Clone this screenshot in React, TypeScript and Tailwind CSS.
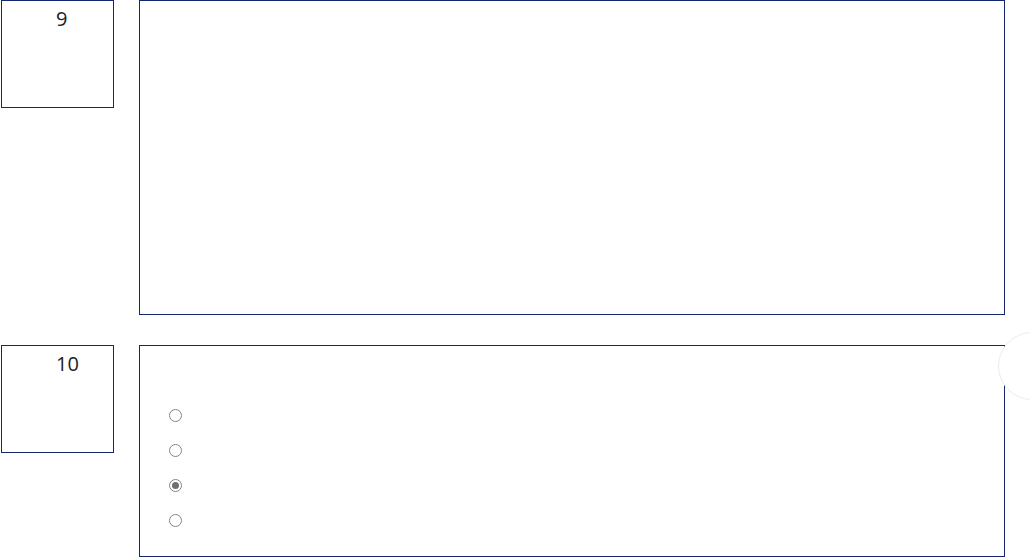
const options = [false, false, true, false];

function NumberBox({ n }: { n: number }) {
  return (
    <div className="ml-[1px] h-[108px] w-[113px] shrink-0 border border-[#13276e] pl-[54px] pt-[4px] font-['Open_Sans',sans-serif] text-[20px] leading-[27px] text-[#222]">
      {n}
    </div>
  );
}

function Radio({ checked }: { checked: boolean }) {
  return (
    <span className="flex h-[13px] w-[13px] items-center justify-center rounded-full border border-[#858585] bg-white">
      {checked && <span className="h-[7px] w-[7px] rounded-full bg-[#6f6f6f]" />}
    </span>
  );
}

export default function App() {
  return (
    <div className="relative h-[558px] w-full overflow-hidden bg-white">
      <div className="flex flex-col gap-[30px]">
        <div className="flex items-start">
          <NumberBox n={9} />
          <div className="ml-[25px] h-[315px] w-[866px] border border-[#13276e]" />
        </div>

        <div className="flex items-start">
          <NumberBox n={10} />
          <div className="ml-[25px] h-[212px] w-[866px] border border-[#13276e] pl-[29px] pt-[63px]">
            <div className="flex flex-col gap-[22px]">
              {options.map((checked, i) => (
                <Radio key={i} checked={checked} />
              ))}
            </div>
          </div>
        </div>
      </div>

      {/* floating round button, mostly off-screen */}
      <div className="absolute left-[998px] top-[332px] h-[68px] w-[68px] rounded-full border border-[#ececec] bg-white" />
    </div>
  );
}
